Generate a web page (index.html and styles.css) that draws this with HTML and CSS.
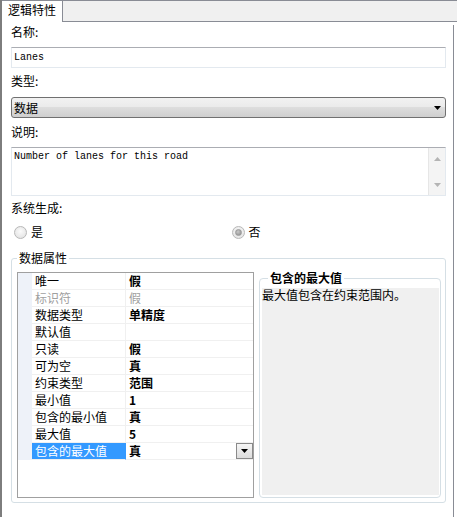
FILE: index.html
```html
<!DOCTYPE html>
<html lang="zh-CN">
<head>
  <meta charset="UTF-8" />
  <title>逻辑特性</title>
  <link rel="stylesheet" href="styles.css">
</head>
<body>

  <div class="window">
    <div class="tabbar">
      <div class="tab">逻辑特性</div>
    </div>

    <div class="page">
      <div class="label first">名称:</div>
      <div class="textbox">Lanes</div>

      <div class="label">类型:</div>
      <div class="combo">
        <span>数据</span>
        <svg width="7" height="4" viewBox="0 0 7 4"><path d="M0 0h7L3.5 4z" fill="#000"/></svg>
      </div>

      <div class="label after-combo">说明:</div>
      <div class="memo">
        <span class="memo-text">Number of lanes for this road</span>
        <div class="vscroll">
          <svg width="7" height="4" viewBox="0 0 7 4"><path d="M0 4h7L3.5 0z" fill="#b4b4b4"/></svg>
          <svg width="7" height="4" viewBox="0 0 7 4"><path d="M0 0h7L3.5 4z" fill="#b4b4b4"/></svg>
        </div>
      </div>

      <div class="label after-memo">系统生成:</div>
      <div class="radios">
        <div class="radio"><span class="circle"></span>是</div>
        <div class="radio"><span class="circle checked"></span>否</div>
      </div>

      <fieldset class="group">
        <legend>数据属性</legend>
        <div class="group-body">
          <div class="propgrid">
            <div class="prop"><span class="gutter"></span><span class="pname">唯一</span><span class="pval">假</span></div>
            <div class="prop disabled"><span class="gutter"></span><span class="pname">标识符</span><span class="pval">假</span></div>
            <div class="prop"><span class="gutter"></span><span class="pname">数据类型</span><span class="pval">单精度</span></div>
            <div class="prop"><span class="gutter"></span><span class="pname">默认值</span><span class="pval"></span></div>
            <div class="prop"><span class="gutter"></span><span class="pname">只读</span><span class="pval">假</span></div>
            <div class="prop"><span class="gutter"></span><span class="pname">可为空</span><span class="pval">真</span></div>
            <div class="prop"><span class="gutter"></span><span class="pname">约束类型</span><span class="pval">范围</span></div>
            <div class="prop"><span class="gutter"></span><span class="pname">最小值</span><span class="pval">1</span></div>
            <div class="prop"><span class="gutter"></span><span class="pname">包含的最小值</span><span class="pval">真</span></div>
            <div class="prop"><span class="gutter"></span><span class="pname">最大值</span><span class="pval">5</span></div>
            <div class="prop selected">
              <span class="gutter"></span>
              <span class="pname">包含的最大值</span>
              <span class="pval">真
                <span class="dropbtn">
                  <svg width="7" height="4" viewBox="0 0 7 4"><path d="M0 0h7L3.5 4z" fill="#000"/></svg>
                </span>
              </span>
            </div>
          </div>

          <fieldset class="help">
            <legend>包含的最大值</legend>
            <div class="help-text">最大值包含在约束范围内。</div>
          </fieldset>
        </div>
      </fieldset>
    </div>
  </div>

</body>
</html>
```

FILE: styles.css
```css
body {
  margin: 0;
  background: #fff;
  color: #000;
  font-family: "Noto Sans CJK SC", sans-serif;
  font-size: 12px;
  line-height: 14px;
}

.window {
  width: 457px;
  height: 517px;
  box-sizing: border-box;
  border-left: 2px solid #7d7d7d;
  overflow: hidden;
}

.tabbar {
  height: 20px;
  display: flex;
  background: #f0f0f0;
  border-top: 1px solid #898c95;
  border-bottom: 1px solid #898c95;
}

.tab {
  width: 61px;
  height: 21px;
  box-sizing: border-box;
  padding: 2px 0 0 6px;
  background: #fff;
  border-right: 1px solid #898c95;
}

.page {
  width: 452px;
  height: 495px;
  box-sizing: border-box;
  padding: 0 7px 0 9px;
  border-right: 1px solid #898c95;
}

.label {
  height: 14px;
  margin-top: 6px;
}

.label.first {
  margin-top: 3px;
}

.label.after-combo {
  margin-top: 7px;
}

.label.after-memo {
  margin-top: 5px;
}

.textbox {
  margin-top: 8px;
  height: 21px;
  box-sizing: border-box;
  padding: 3px 0 0 2px;
  border: 1px solid #e3e9ef;
  border-top-color: #abadb3;
  font-family: "Liberation Mono", monospace;
  font-size: 10px;
  line-height: 14px;
}

.combo {
  margin-top: 9px;
  height: 21px;
  box-sizing: border-box;
  padding: 0 4px 0 2px;
  display: flex;
  align-items: center;
  justify-content: space-between;
  border: 1px solid #707070;
  border-radius: 3px;
  background: linear-gradient(#f2f2f2, #ebebeb 45%, #dddddd 50%, #cfcfcf);
}

.memo {
  margin-top: 8px;
  height: 49px;
  box-sizing: border-box;
  display: flex;
  justify-content: space-between;
  border: 1px solid #e3e9ef;
  border-top-color: #abadb3;
}

.memo-text {
  padding: 2px 0 0 2px;
  font-family: "Liberation Mono", monospace;
  font-size: 10px;
  line-height: 14px;
}

.vscroll {
  width: 16px;
  display: flex;
  flex-direction: column;
  align-items: center;
  justify-content: space-between;
  padding: 9px 0 8px;
  background: #f4f4f4;
  border-left: 1px solid #e6e6e6;
}

.radios {
  margin-top: 10px;
  height: 14px;
  display: grid;
  grid-template-columns: 1fr 1fr;
}

.radio {
  display: flex;
  align-items: center;
  gap: 4px;
  padding-left: 3px;
  color: #000;
}

.circle {
  width: 11px;
  height: 11px;
  border: 1px solid #b8b8b8;
  border-radius: 50%;
  background: radial-gradient(circle at 50% 40%, #fbfbfb, #dedede);
  display: flex;
  align-items: center;
  justify-content: center;
}

.circle.checked::after {
  content: "";
  width: 5px;
  height: 5px;
  border-radius: 50%;
  background: radial-gradient(circle at 40% 35%, #c8c8c8, #8a8a8a);
  border: 1px solid #9a9a9a;
}

.group {
  margin: 12px 0 0;
  min-width: 0;
  padding: 7px 4px 4px 5px;
  border: 1px solid #d5dfe5;
  border-radius: 3px;
}

.group legend {
  padding: 0 2px;
  line-height: 14px;
}

.group-body {
  display: flex;
  gap: 5px;
  height: 226px;
}

.propgrid {
  width: 237px;
  flex-shrink: 0;
  box-sizing: border-box;
  border: 1px solid #a0a0a0;
}

.prop {
  display: grid;
  grid-template-columns: 14px 94px 1fr;
  height: 17px;
  line-height: 16px;
}

.gutter {
  background: #eef2f9;
}

.pname {
  padding-left: 3px;
  border-right: 1px solid #f0f0f0;
  border-bottom: 1px solid #f0f0f0;
}

.pval {
  padding-left: 3px;
  font-weight: bold;
  border-bottom: 1px solid #f0f0f0;
  display: flex;
  align-items: center;
  justify-content: space-between;
}

.prop.disabled .pname,
.prop.disabled .pval {
  color: #a0a0a0;
  font-weight: normal;
}

.prop.selected .pname {
  background: #3399ff;
  color: #fff;
  border-right-color: #3399ff;
}

.dropbtn {
  width: 17px;
  height: 16px;
  box-sizing: border-box;
  display: flex;
  align-items: center;
  justify-content: center;
  border: 1px solid #8a8a8a;
  background: linear-gradient(#f6f6f6, #dcdcdc);
}

.help {
  flex: 1;
  min-width: 0;
  margin: 0;
  padding: 4px 1px 2px 2px;
  border: 1px solid #d5dfe5;
  border-radius: 4px;
}

.help legend {
  margin-left: 6px;
  padding: 0 2px;
  font-weight: bold;
  line-height: 12px;
}

.help-text {
  height: 207px;
  background: #f0f0f0;
  line-height: 14px;
}
```
